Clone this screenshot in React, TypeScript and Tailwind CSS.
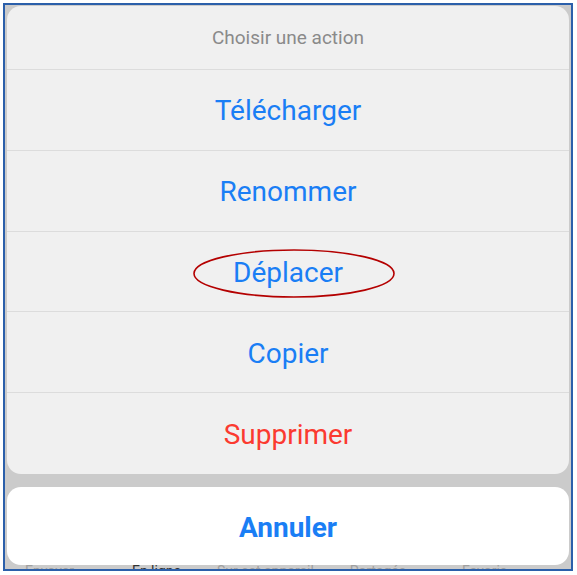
import React from "react";

const rows = [
  { label: "Télécharger", red: false },
  { label: "Renommer", red: false },
  { label: "Déplacer", red: false, circled: true },
  { label: "Copier", red: false },
  { label: "Supprimer", red: true },
];

export default function App() {
  return (
    <div className="w-[577px] h-[575px] bg-white pt-[3px] pl-[3px]" style={{ fontFamily: "Roboto, 'Liberation Sans', sans-serif" }}>
      <div className="w-[570px] h-[568px] border-2 border-[#2b5faa] bg-[#cbcbcb] flex flex-col pt-[1px] px-[2px] overflow-hidden">
        <div className="h-[468px] bg-[#f0f0f0] rounded-[14px] flex flex-col">
          <div className="h-[64px] flex items-center justify-center border-b border-[#dcdcdc] text-[19px] text-[#8a8a8a] pt-[2px]">
            Choisir une action
          </div>
          {rows.map((r, i) => (
            <div
              key={r.label}
              className={`relative h-[81px] flex items-center justify-center text-[28px] pt-[3px] ${r.red ? "text-[#fb3a30]" : "text-[#1a7ef5]"} ${i < rows.length - 1 ? "border-b border-[#dcdcdc]" : ""}`}
            >
              <span>{r.label}</span>
              {r.circled && (
                <svg className="absolute left-[185px] top-[16px]" width="204" height="51" viewBox="0 0 204 51">
                  <ellipse cx="102" cy="25.5" rx="100" ry="23.5" fill="none" stroke="#b40000" strokeWidth="1.6" />
                </svg>
              )}
            </div>
          ))}
        </div>
        <div className="mt-[13px] h-[78px] shrink-0 bg-white rounded-[14px] flex items-center justify-center text-[28px] font-bold text-[#1a7ef5] pt-[3px] relative z-10">
          Annuler
        </div>
        <div className="h-[4px] shrink-0 overflow-hidden">
          <div className="flex text-[14px] text-[#a0a0a0] mt-[-2px] leading-[16px]">
            <span className="ml-[18px]">Envoyer</span>
            <span className="ml-[58px] text-[#333]">En ligne</span>
            <span className="ml-[36px]">Sur cet appareil</span>
            <span className="ml-[36px]">Partagés</span>
            <span className="ml-[56px]">Favoris</span>
          </div>
        </div>
      </div>
    </div>
  );
}
